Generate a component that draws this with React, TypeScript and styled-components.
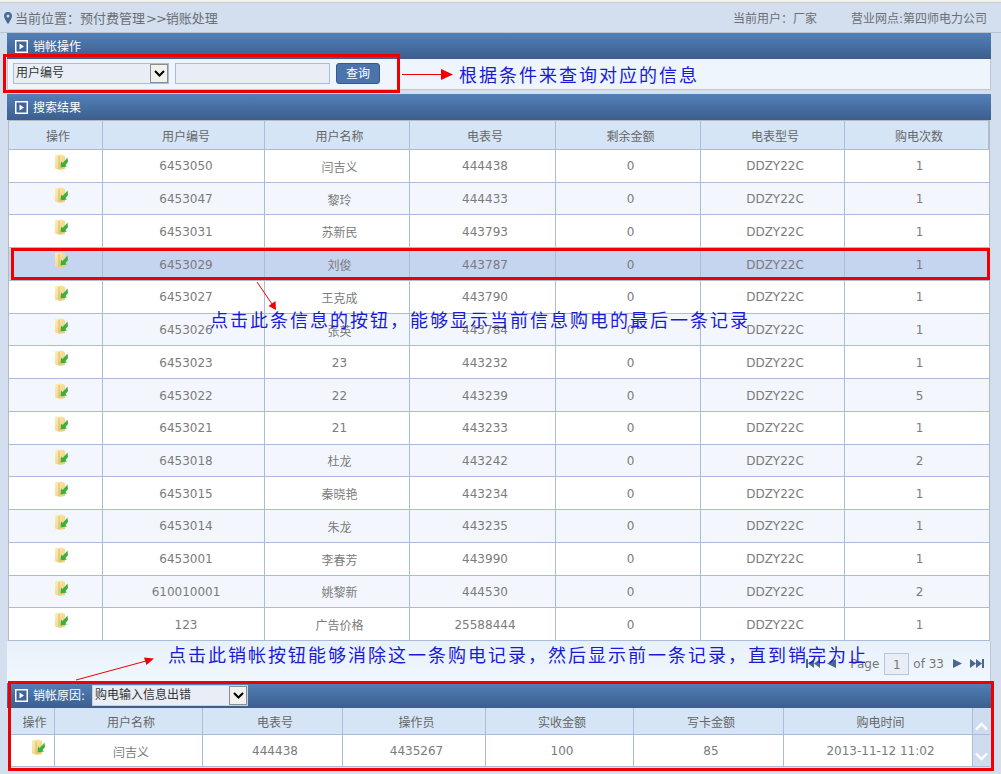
import styled, { createGlobalStyle } from "styled-components";

const FONT = `"DejaVu Sans", "Noto Sans CJK SC", sans-serif`;
const LINE = "#a9bcd8";

const mainColumns = "94px 162px 145px 146px 145px 144px 1fr";
const subColumns = "45px 148px 140px 143px 148px 150px 189px 1fr";

const mainHead = ["操作", "用户编号", "用户名称", "电表号", "剩余金额", "电表型号", "购电次数"];
const subHead = ["操作", "用户名称", "电表号", "操作员", "实收金额", "写卡金额", "购电时间"];

const rows = [
  ["6453050", "闫吉义", "444438", "0", "DDZY22C", "1"],
  ["6453047", "黎玲", "444433", "0", "DDZY22C", "1"],
  ["6453031", "苏新民", "443793", "0", "DDZY22C", "1"],
  ["6453029", "刘俊", "443787", "0", "DDZY22C", "1"],
  ["6453027", "王克成", "443790", "0", "DDZY22C", "1"],
  ["6453026", "张英", "443784", "0", "DDZY22C", "1"],
  ["6453023", "23", "443232", "0", "DDZY22C", "1"],
  ["6453022", "22", "443239", "0", "DDZY22C", "5"],
  ["6453021", "21", "443233", "0", "DDZY22C", "1"],
  ["6453018", "杜龙", "443242", "0", "DDZY22C", "2"],
  ["6453015", "秦晓艳", "443234", "0", "DDZY22C", "1"],
  ["6453014", "朱龙", "443235", "0", "DDZY22C", "1"],
  ["6453001", "李春芳", "443990", "0", "DDZY22C", "1"],
  ["610010001", "姚黎新", "444530", "0", "DDZY22C", "2"],
  ["123", "广告价格", "25588444", "0", "DDZY22C", "1"],
];

const subRow = ["闫吉义", "444438", "4435267", "100", "85", "2013-11-12 11:02"];

const PlayBox = () => (
  <svg width="13" height="13" viewBox="0 0 13 13">
    <rect x="0.75" y="0.75" width="11.5" height="11.5" fill="#3f659a" stroke="#fff" strokeWidth="1.5" />
    <path d="M4.5 3.5 L9 6.5 L4.5 9.5 Z" fill="#fff" />
  </svg>
);

const FolderIcon = () => (
  <svg width="15" height="17" viewBox="0 0 15 17">
    <defs>
      <linearGradient id="folderFill" x1="0" y1="0" x2="1" y2="1">
        <stop offset="0" stopColor="#fdf0b8" />
        <stop offset="1" stopColor="#ecc974" />
      </linearGradient>
    </defs>
    <path d="M1 1 L8 0.5 L11 2 L11 15 L6 16 L1 14.5 Z" fill="url(#folderFill)" />
    <path d="M5 2 L5 15" stroke="#dfb765" strokeWidth="1" />
    <path d="M13.5 3.5 L14 8 L11.5 11 L13 12.5 L6.5 13.5 L7 7.5 L8.5 9 L11 6.5 Z" fill="#3cb03a" />
  </svg>
);

const Chevron = () => (
  <svg width="11" height="7" viewBox="0 0 11 7">
    <path d="M1 1 L5.5 5.5 L10 1" fill="none" stroke="#000" strokeWidth="2" />
  </svg>
);

const ScrollChevron = ({ up }: { up?: boolean }) => (
  <svg width="13" height="9" viewBox="0 0 13 9">
    <path d={up ? "M1 7.5 L6.5 2 L12 7.5" : "M1 1.5 L6.5 7 L12 1.5"} fill="none" stroke="#fff" strokeWidth="2.4" />
  </svg>
);

export default function App() {
  return (
    <Page>
      <GlobalStyle />
      <TopStrip />
      <TopBar>
        <Location>
          <svg width="8" height="12" viewBox="0 0 8 12">
            <path d="M4 0 C1.6 0 0 1.7 0 3.9 C0 6.5 4 12 4 12 C4 12 8 6.5 8 3.9 C8 1.7 6.4 0 4 0 Z M4 2.4 A1.5 1.5 0 1 1 4 5.4 A1.5 1.5 0 1 1 4 2.4 Z" fill="#456a94" fillRule="evenodd" />
          </svg>
          <span>当前位置：预付费管理<Chevrons>&gt;&gt;</Chevrons>销账处理</span>
        </Location>
        <UserInfo>
          <span>当前用户：厂家</span>
          <span>营业网点:第四师电力公司</span>
        </UserInfo>
      </TopBar>

      <Content>
        <PanelHeader>
          <PlayBox />
          <PanelTitle>销帐操作</PanelTitle>
        </PanelHeader>
        <SearchRow>
          <SelectBox $width={156}>
            用户编号
            <SelectArrow><Chevron /></SelectArrow>
          </SelectBox>
          <SearchInput />
          <QueryButton>查询</QueryButton>
        </SearchRow>

        <PanelHeader $top={4}>
          <PlayBox />
          <PanelTitle>搜索结果</PanelTitle>
        </PanelHeader>
        <Sheet>
          <HeadRow $columns={mainColumns} $height={29}>
            {mainHead.map((title) => (
              <HeadCell key={title}>{title}</HeadCell>
            ))}
          </HeadRow>
          {rows.map((row, index) => (
            <BodyRow key={row[0]} $columns={mainColumns} $striped={index % 2 === 1} $selected={index === 3}>
              <IconCell $inset={45}><FolderIcon /></IconCell>
              {row.map((value, cellIndex) => (
                <BodyCell key={cellIndex}>{value}</BodyCell>
              ))}
            </BodyRow>
          ))}
        </Sheet>
        <Pager>
          <PagerGlyph width="14" height="9" viewBox="0 0 14 9">
            <path d="M0 0 H2 V9 H0 Z M2 4.5 L8 0 V9 Z M8 4.5 L14 0 V9 Z" />
          </PagerGlyph>
          <PagerGlyph width="9" height="9" viewBox="0 0 9 9" $left={7}>
            <path d="M0 4.5 L9 0 V9 Z" />
          </PagerGlyph>
          <PagerText $left={14}>Page</PagerText>
          <PageInput>1</PageInput>
          <PagerText $left={4}>of 33</PagerText>
          <PagerGlyph width="9" height="9" viewBox="0 0 9 9" $left={9}>
            <path d="M0 0 L9 4.5 L0 9 Z" />
          </PagerGlyph>
          <PagerGlyph width="14" height="9" viewBox="0 0 14 9" $left={8}>
            <path d="M0 0 L6 4.5 L0 9 Z M6 0 L12 4.5 L6 9 Z M12 0 H14 V9 H12 Z" />
          </PagerGlyph>
        </Pager>

        <SubHeader>
          <PlayBox />
          <PanelTitle>销帐原因:</PanelTitle>
          <SelectBox $width={156} $light>
            购电输入信息出错
            <SelectArrow><Chevron /></SelectArrow>
          </SelectBox>
        </SubHeader>
        <SubSheet>
          <HeadRow $columns={subColumns} $height={27}>
            {subHead.map((title) => (
              <HeadCell key={title}>{title}</HeadCell>
            ))}
            <ScrollTrack />
          </HeadRow>
          <BodyRow $columns={subColumns} $height={32}>
            <IconCell $inset={21}><FolderIcon /></IconCell>
            {subRow.map((value, index) => (
              <BodyCell key={index}>{value}</BodyCell>
            ))}
            <ScrollTrack>
              <ScrollChevron up />
              <ScrollChevron />
            </ScrollTrack>
          </BodyRow>
        </SubSheet>
      </Content>

      <RedBox $left={3} $top={54} $width={397} $height={39} />
      <RedBox $left={11} $top={248} $width={979} $height={32} />
      <RedBox $left={8} $top={681} $width={986} $height={90} />

      <Arrows width="1001" height="774" viewBox="0 0 1001 774">
        <path d="M402 74.5 H443" stroke="#e00" strokeWidth="1" />
        <path d="M441 69 L453 74.5 L441 80 Z" fill="#e00" />
        <path d="M257 282 L272 304" stroke="#e00" strokeWidth="1" />
        <path d="M268.5 306 L276 310 L275.5 301 Z" fill="#e00" />
        <path d="M76 680 L146 661" stroke="#e00" strokeWidth="1" />
        <path d="M144 657.5 L154 658.5 L146.5 665 Z" fill="#e00" />
      </Arrows>

      <Note $left={459} $top={61}>根据条件来查询对应的信息</Note>
      <Note $left={210} $top={306}>点击此条信息的按钮，能够显示当前信息购电的最后一条记录</Note>
      <Note $left={168} $top={641}>点击此销帐按钮能够消除这一条购电记录，然后显示前一条记录，直到销完为止</Note>
    </Page>
  );
}

const GlobalStyle = createGlobalStyle`
  html, body {
    margin: 0;
    padding: 0;
    background: #d3deee;
  }
`;

const Page = styled.div`
  position: relative;
  width: 1001px;
  height: 774px;
  overflow: hidden;
  background: #d3deee;
  font-family: ${FONT};
  font-size: 12px;
  color: #777;
`;

const TopStrip = styled.div`
  height: 2px;
  background: #f1f1ee;
  border-bottom: 1px solid #c9cbcc;
`;

const TopBar = styled.div`
  height: 29px;
  display: flex;
  align-items: center;
  justify-content: space-between;
  padding: 0 14px 0 4px;
  border-bottom: 1px solid #b9c3d2;
`;

const Location = styled.div`
  display: flex;
  align-items: center;
  gap: 3px;
  font-size: 13px;
  color: #6b6f75;
`;

const Chevrons = styled.span`
  letter-spacing: -1px;
  margin-left: 1px;
`;

const UserInfo = styled.div`
  display: flex;
  gap: 34px;
  color: #6b6f75;
`;

const Content = styled.div`
  display: flex;
  flex-direction: column;
  width: 984px;
  margin-left: 7px;
`;

const PanelHeader = styled.div<{ $top?: number }>`
  height: 26px;
  margin-top: ${(p) => p.$top ?? 0}px;
  display: flex;
  align-items: center;
  gap: 5px;
  padding-left: 8px;
  background: linear-gradient(180deg, #5280b8 0%, #3c5e8e 100%);
  color: #fff;
  font-size: 12px;
`;

const PanelTitle = styled.span`
  margin-top: -2px;
`;

const SearchRow = styled.div`
  height: 31px;
  box-sizing: border-box;
  display: flex;
  align-items: center;
  padding: 0 0 1px 5px;
  background: #eef5fc;
  border: 1px solid #bcc6d4;
  border-top: 0;
`;

const SelectBox = styled.div<{ $width: number; $light?: boolean }>`
  position: relative;
  box-sizing: border-box;
  width: ${(p) => p.$width}px;
  height: 21px;
  line-height: 19px;
  padding-left: 2px;
  background: #e9eef6;
  border: 1px solid ${(p) => (p.$light ? "#c6d0de" : LINE)};
  color: #333;
  font-size: 12px;
`;

const SelectArrow = styled.span`
  position: absolute;
  top: 0;
  right: 0;
  width: 18px;
  height: 19px;
  box-sizing: border-box;
  display: flex;
  align-items: center;
  justify-content: center;
  background: #f1f1ee;
  border: 1px solid #8a8f96;
`;

const SearchInput = styled.div`
  box-sizing: border-box;
  width: 155px;
  height: 21px;
  margin-left: 6px;
  background: #e9eef6;
  border: 1px solid ${LINE};
`;

const QueryButton = styled.button`
  box-sizing: border-box;
  width: 44px;
  height: 21px;
  margin-left: 6px;
  padding: 0 0 2px;
  background: #4a74ab;
  border: 1px solid #36598a;
  border-radius: 3px;
  color: #fff;
  font-family: ${FONT};
  font-size: 12px;
`;

const Sheet = styled.div`
  height: 521px;
  box-sizing: border-box;
  display: flex;
  flex-direction: column;
  margin-left: 1px;
  width: 982px;
  background: #fff;
  border-top: 1px solid #b4b9c2;
  border-left: 1px solid #b4b9c2;
  border-right: 1px solid #b4b9c2;
`;

const HeadRow = styled.div<{ $columns: string; $height: number }>`
  flex: 0 0 ${(p) => p.$height}px;
  box-sizing: border-box;
  display: grid;
  grid-template-columns: ${(p) => p.$columns};
  background: #d5e5f6;
  border-bottom: 1px solid ${LINE};
`;

const HeadCell = styled.div`
  display: flex;
  align-items: center;
  justify-content: center;
  padding-left: 5px;
  border-right: 1px solid ${LINE};
  color: #666;
`;

const BodyRow = styled.div<{ $columns: string; $striped?: boolean; $selected?: boolean; $height?: number }>`
  flex: ${(p) => (p.$height ? `0 0 ${p.$height}px` : "1 1 0")};
  min-height: 0;
  box-sizing: border-box;
  display: grid;
  grid-template-columns: ${(p) => p.$columns};
  background: ${(p) => (p.$selected ? "#c5d4ef" : p.$striped ? "#f3f7fd" : "#fff")};
  border-bottom: 1px solid ${LINE};
`;

const BodyCell = styled.div`
  display: flex;
  align-items: center;
  justify-content: center;
  padding: 1px 0 0 5px;
  border-right: 1px solid ${LINE};
  color: #7b7b7b;
  &:last-child {
    border-right: 0;
  }
`;

const IconCell = styled.div<{ $inset: number }>`
  padding: 4px 0 0 ${(p) => p.$inset}px;
  border-right: 1px solid ${LINE};
  svg {
    display: block;
  }
`;

const Pager = styled.div`
  height: 42px;
  box-sizing: border-box;
  display: flex;
  align-items: center;
  justify-content: flex-end;
  padding: 3px 6px 0 0;
  background: linear-gradient(180deg, #e8f1fb 0%, #f1f7fd 100%);
  border-right: 1px solid #bcc6d4;
`;

const PagerGlyph = styled.svg<{ $left?: number }>`
  margin-left: ${(p) => p.$left ?? 0}px;
  fill: #48688f;
`;

const PagerText = styled.span<{ $left?: number }>`
  margin-left: ${(p) => p.$left ?? 0}px;
  color: #777;
`;

const PageInput = styled.div`
  box-sizing: border-box;
  width: 25px;
  height: 22px;
  margin-left: 5px;
  line-height: 22px;
  text-align: center;
  background: #e9eef6;
  border: 1px solid #b7c6da;
`;

const SubHeader = styled.div`
  height: 25px;
  display: flex;
  align-items: center;
  gap: 5px;
  padding-left: 8px;
  background: linear-gradient(180deg, #5280b8 0%, #3c5e8e 100%);
  color: #fff;
  ${SelectBox} {
    margin-left: 2px;
  }
`;

const SubSheet = styled.div`
  display: flex;
  flex-direction: column;
  margin-left: 3px;
  width: 980px;
  background: #fff;
`;

const ScrollTrack = styled.div`
  display: flex;
  flex-direction: column;
  align-items: center;
  justify-content: space-between;
  padding: 0 0 5px;
  background: #cfdcef;
  svg:first-child {
    margin-top: -13px;
  }
`;

const RedBox = styled.div<{ $left: number; $top: number; $width: number; $height: number }>`
  position: absolute;
  left: ${(p) => p.$left}px;
  top: ${(p) => p.$top}px;
  width: ${(p) => p.$width}px;
  height: ${(p) => p.$height}px;
  box-sizing: border-box;
  border: 3px solid #ee0000;
`;

const Arrows = styled.svg`
  position: absolute;
  inset: 0;
`;

const Note = styled.div<{ $left: number; $top: number }>`
  position: absolute;
  left: ${(p) => p.$left}px;
  top: ${(p) => p.$top}px;
  font-family: "Noto Sans CJK SC", sans-serif;
  font-size: 18px;
  line-height: 26px;
  letter-spacing: 2px;
  white-space: nowrap;
  color: #1a1ad6;
`;
